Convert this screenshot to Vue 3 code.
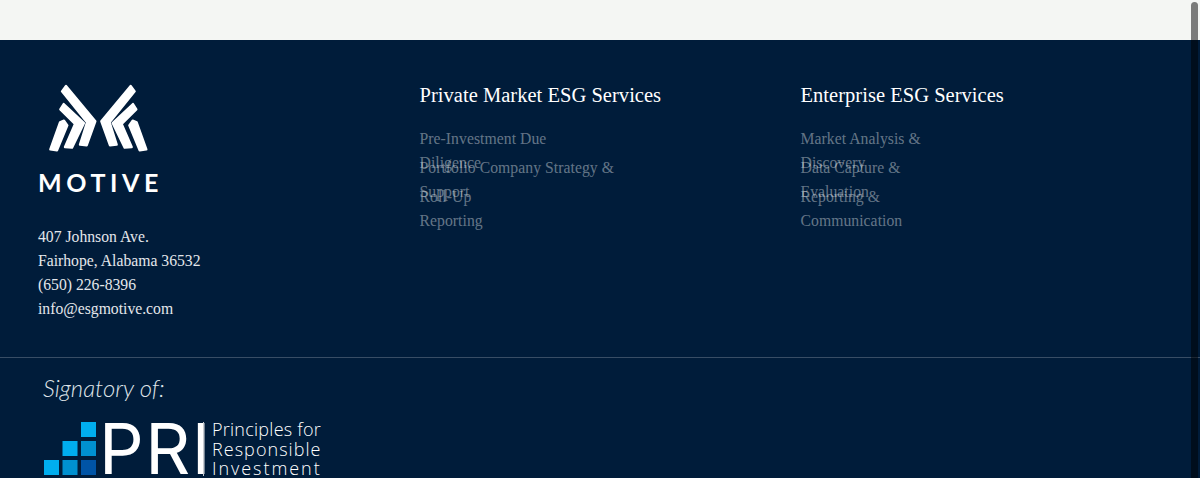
<script setup>
const columns = [
  {
    title: 'Private Market ESG Services',
    items: [
      ['Pre-Investment Due', 'Diligence'],
      ['Portfolio Company Strategy &', 'Support'],
      ['Roll-Up', 'Reporting']
    ]
  },
  {
    title: 'Enterprise ESG Services',
    items: [
      ['Market Analysis &', 'Discovery'],
      ['Data Capture &', 'Evaluation'],
      ['Reporting &', 'Communication']
    ]
  }
]
const address = ['407 Johnson Ave.', 'Fairhope, Alabama 36532', '(650) 226-8396', 'info@esgmotive.com']
const squares = [
  { x: 37, y: 0, c: '#00aeef' },
  { x: 18.5, y: 19, c: '#00aeef' },
  { x: 37, y: 19, c: '#0090d0' },
  { x: 0, y: 38, c: '#00aeef' },
  { x: 18.5, y: 38, c: '#0090d0' },
  { x: 37, y: 38, c: '#0054a6' }
]
const strokes = [
  'M51 34 L63 18 L151 124 L125 196 L105 194 L126 127 Z',
  'M46 88 L56 72 L117 129 L81 203 L60 201 L90 132 Z',
  'M45 127 L57 122 L67 136 L36 211 L16 208 Z'
]
</script>

<template>
  <div class="page">
    <div class="band"></div>
    <footer class="footer">
      <div class="top">
        <div class="brand">
          <svg class="mark" viewBox="0 0 330 225" width="110" height="75">
            <g fill="#fff" stroke="#fff" stroke-width="7" stroke-linejoin="round">
              <path v-for="d in strokes" :key="d" :d="d" />
            </g>
            <g fill="#fff" stroke="#fff" stroke-width="7" stroke-linejoin="round" transform="translate(320 0) scale(-1 1)">
              <path v-for="d in strokes" :key="d" :d="d" />
            </g>
          </svg>
          <div class="wordmark">MOTIVE</div>
          <div class="address">
            <div v-for="line in address" :key="line">{{ line }}</div>
          </div>
        </div>
        <div v-for="col in columns" :key="col.title" class="col">
          <h3>{{ col.title }}</h3>
          <ul>
            <li v-for="item in col.items" :key="item[0]">{{ item[0] }}<br />{{ item[1] }}</li>
          </ul>
        </div>
      </div>
      <div class="bottom">
        <div class="sign">Signatory of:</div>
        <div class="pri">
          <svg class="squares" viewBox="0 0 52 53" width="52" height="53">
            <rect v-for="(s, i) in squares" :key="i" :x="s.x" :y="s.y" width="15" height="15" :fill="s.c" />
          </svg>
          <span class="pri-big">PRI</span>
          <span class="pri-rule"></span>
          <span class="pri-text">
            <span class="l1">Principles for</span>
            <span class="l2">Responsible</span>
            <span class="l3">Investment</span>
          </span>
        </div>
      </div>
    </footer>
    <div class="scrollbar"></div>
  </div>
</template>

<style>
html, body { margin: 0; height: 478px; overflow: hidden; }
</style>

<style scoped>
.page { width: 1200px; height: 478px; overflow: hidden; position: relative; font-family: "Liberation Serif", serif; }
.band { height: 40px; background: #f4f6f3; }
.footer { height: 438px; background: #001c3a; color: #fff; box-sizing: border-box; overflow: hidden; }
.top { display: flex; height: 277px; border-bottom: 1px solid rgba(255,255,255,.22); padding: 40px 0 0 38px; }
.brand { width: 381.5px; flex: none; }
.mark { display: block; margin-left: 7px; }
.wordmark { font-family: Lato, sans-serif; font-weight: 700; font-size: 25px; line-height: 27px; letter-spacing: 4.6px; margin-top: 14px; }
.address { margin-top: 29px; font-size: 15.7px; line-height: 24px; color: #e4e7eb; }
.col { width: 381px; flex: none; }
h3 { margin: 0; padding-top: 2px; font-size: 20.5px; font-weight: 400; line-height: 26px; letter-spacing: .03px; color: #fff; }
ul { list-style: none; margin: 18.5px 0 0; padding: 0; }
li { height: 29px; line-height: 24.5px; font-size: 15.7px; letter-spacing: .05px; color: rgba(255,255,255,.4); white-space: nowrap; }
.bottom { padding: 14px 0 0 44px; }
.sign { font-family: Lato, sans-serif; font-style: italic; font-weight: 300; font-size: 23.9px; line-height: 32px; color: #dfe3e8; margin-left: -1px; }
.pri { display: flex; align-items: flex-start; margin-top: 18px; }
.squares { display: block; flex: none; }
.pri-big { font-family: Inter, sans-serif; font-weight: 400; font-size: 70px; line-height: 53px; margin-left: 3px; width: 96px; letter-spacing: 1.5px; white-space: nowrap; }
.pri-rule { width: 1px; height: 54px; background: #c8ccd2; margin-left: 8px; }
.pri-text { display: flex; flex-direction: column; font-family: "Open Sans", sans-serif; font-weight: 300; font-size: 18px; line-height: 19.5px; margin-left: 8px; margin-top: -2px; white-space: nowrap; }
.l1 { letter-spacing: .25px; }
.l2 { letter-spacing: 1.05px; }
.l3 { letter-spacing: 1.95px; }
.scrollbar { position: absolute; right: 2px; top: 2px; width: 7px; height: 476px; border-radius: 4px 4px 0 0; background: rgba(0,0,0,.5); }
</style>
